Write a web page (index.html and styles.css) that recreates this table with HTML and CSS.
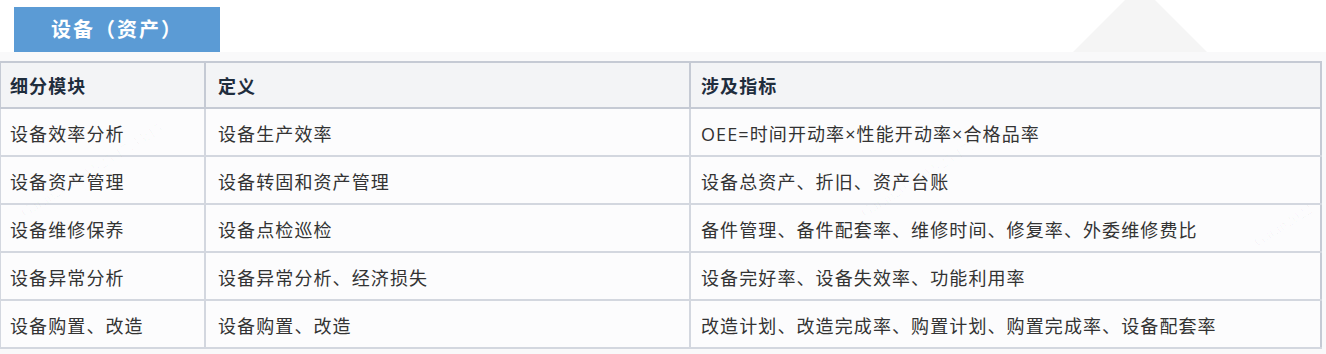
FILE: index.html
```html
<!DOCTYPE html>
<html lang="zh-CN">
<head>
    <meta charset="UTF-8">
    <meta name="viewport" content="width=device-width, initial-scale=1.0">
    <title>设备（资产）</title>
    <link rel="stylesheet" href="styles.css">
</head>
<body>
    <div class="page">
        <div class="top">
            <div class="title">设备（资产）</div>
            <div class="deco"></div>
        </div>
        <div class="panel">
            <table class="grid">
                <thead>
                    <tr>
                        <th class="c1">细分模块</th>
                        <th class="c2">定义</th>
                        <th>涉及指标</th>
                    </tr>
                </thead>
                <tbody>
                    <tr>
                        <td>设备效率分析</td>
                        <td>设备生产效率</td>
                        <td>OEE=时间开动率×性能开动率×合格品率</td>
                    </tr>
                    <tr>
                        <td>设备资产管理</td>
                        <td>设备转固和资产管理</td>
                        <td>设备总资产、折旧、资产台账</td>
                    </tr>
                    <tr>
                        <td>设备维修保养</td>
                        <td>设备点检巡检</td>
                        <td>备件管理、备件配套率、维修时间、修复率、外委维修费比</td>
                    </tr>
                    <tr>
                        <td>设备异常分析</td>
                        <td>设备异常分析、经济损失</td>
                        <td>设备完好率、设备失效率、功能利用率</td>
                    </tr>
                    <tr>
                        <td>设备购置、改造</td>
                        <td>设备购置、改造</td>
                        <td>改造计划、改造完成率、购置计划、购置完成率、设备配套率</td>
                    </tr>
                </tbody>
            </table>
            <span class="mark m1">Garan2022-02-25 17:33:15</span>
            <span class="mark m2">Garan2022-02-25 17:33:15</span>
            <span class="mark m3">Garan2022</span>
        </div>
    </div>
</body>
</html>
```

FILE: styles.css
```css
body {
    margin: 0;
    background-color: #ffffff;
    font-family: "Open Sans", "Noto Sans CJK SC", sans-serif;
    color: #333333;
}
.page {
    width: 1326px;
    height: 354px;
    overflow: hidden;
}
.top {
    position: relative;
    height: 52px;
    padding-top: 7px;
    box-sizing: border-box;
    padding-left: 14px;
}
.title {
    position: relative;
    z-index: 1;
    width: 206px;
    height: 45px;
    background-color: #5b9bd5;
    color: #ffffff;
    font-size: 20px;
    font-weight: bold;
    line-height: 45px;
    text-align: center;
    letter-spacing: 2px;
}
.deco {
    position: absolute;
    left: 1073px;
    top: -15px;
    width: 0;
    height: 0;
    border-left: 67px solid transparent;
    border-right: 67px solid transparent;
    border-bottom: 67px solid #f5f5f5;
}
.panel {
    position: relative;
    background-color: #f9f9fa;
    padding-top: 9px;
    height: 302px;
    box-sizing: border-box;
    overflow: hidden;
}
.grid {
    border-collapse: collapse;
    width: 1323px;
    margin-left: -1px;
    font-size: 18px;
    letter-spacing: 1.1px;
    background-color: #fcfcfd;
}
.grid th,
.grid td {
    border: 2px solid #d3d7df;
    text-align: left;
    padding: 0 10px;
    height: 44px;
    white-space: nowrap;
}
.grid th:first-child,
.grid td:first-child {
    padding-left: 9px;
}
.grid th:nth-child(2),
.grid td:nth-child(2) {
    padding-left: 12px;
}
.grid th {
    background-color: #f3f4f6;
    color: #1f2d3d;
    font-weight: bold;
    border-color: #c5cad4;
}
.grid td {
    border-width: 1px 2px 2px 2px;
    padding-top: 2px;
}
.grid th:last-child,
.grid td:last-child {
    border-right-color: #c5cad4;
}
.c1 {
    width: 184px;
}
.c2 {
    width: 461px;
}
.mark {
    position: absolute;
    color: rgba(0, 0, 0, 0.03);
    font-family: "Liberation Serif", serif;
    font-size: 15px;
    transform: rotate(-32deg);
    white-space: nowrap;
    pointer-events: none;
}
.m1 {
    left: 10px;
    top: 110px;
}
.m2 {
    left: 850px;
    top: 110px;
}
.m3 {
    left: 1250px;
    top: 165px;
}
```
